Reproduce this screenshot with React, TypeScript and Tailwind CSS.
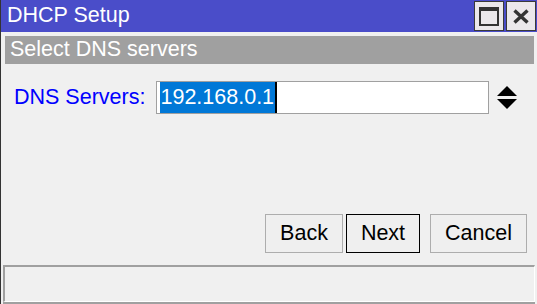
const font = { fontFamily: '"Liberation Sans", Arial, sans-serif' };

function TitleButton({ children }: { children: React.ReactNode }) {
  return (
    <div className="w-[30px] h-[30px] bg-[#ebe8eb] border border-[#3a3a3a] flex items-center justify-center">
      {children}
    </div>
  );
}

function DialogButton({ label, width, active }: { label: string; width: string; active?: boolean }) {
  return (
    <button
      className={`${width} h-[39px] bg-[#efefef] text-[21.5px] text-black flex items-center justify-center border ${
        active ? "border-black" : "border-[#adadad]"
      }`}
    >
      {label}
    </button>
  );
}

export default function App() {
  return (
    <div
      className="w-[537px] h-[304px] bg-[#f0f0f0] border-l border-[#333] flex flex-col overflow-hidden"
      style={font}
    >
      {/* title bar */}
      <div className="h-[32px] bg-[#4a4dc9] flex items-center justify-between pl-[6px] pr-[1px]">
        <span className="text-white text-[21.5px] leading-none">DHCP Setup</span>
        <div className="flex gap-[2px]">
          <TitleButton>
            <div className="w-[20px] h-[19px] border-2 border-t-[4px] border-[#333]" />
          </TitleButton>
          <TitleButton>
            <svg width="16" height="15" viewBox="0 0 16 15">
              <path d="M1.5 1.5 L14.5 13.5 M14.5 1.5 L1.5 13.5" stroke="#333" strokeWidth="3.4" />
            </svg>
          </TitleButton>
        </div>
      </div>

      {/* step header */}
      <div className="mt-[4px] ml-[4px] mr-[3px] h-[28px] bg-[#a0a0a0] flex items-center pl-[5px]">
        <span className="text-white text-[21.5px] leading-none">Select DNS servers</span>
      </div>

      {/* dns row */}
      <div className="mt-[17px] flex items-center pl-[13px]">
        <span className="text-[#0000ff] text-[21.5px] w-[142px]">DNS Servers:</span>
        <div className="w-[333px] h-[33px] bg-white border border-[#a0a0a0] flex items-center pl-[3px]">
          <span className="h-[31px] bg-[#0078d7] text-white text-[21.5px] leading-[31px] px-[0.5px]">
            192.168.0.1
          </span>
          <span className="w-[2px] h-[31px] bg-black" />
        </div>
        <svg className="ml-[8px]" width="20" height="24" viewBox="0 0 20 24">
          <path d="M10 0 L20 10 L0 10 Z" fill="#000" />
          <path d="M0 13 L20 13 L10 23 Z" fill="#000" />
        </svg>
      </div>

      {/* buttons */}
      <div className="mt-[100px] flex justify-end pr-[10px]">
        <DialogButton label="Back" width="w-[78px]" />
        <div className="w-[3px]" />
        <DialogButton label="Next" width="w-[74px]" active />
        <div className="w-[10px]" />
        <DialogButton label="Cancel" width="w-[97px]" />
      </div>

      {/* status bar */}
      <div className="mt-[12px] ml-[2px] mr-[2px] h-[37px] border-t-2 border-l-2 border-[#a0a0a0] border-r border-b border-r-white border-b-white" />
      <div className="h-[2px] bg-[#a0a0a0] ml-[2px] mr-[2px]" />
    </div>
  );
}
